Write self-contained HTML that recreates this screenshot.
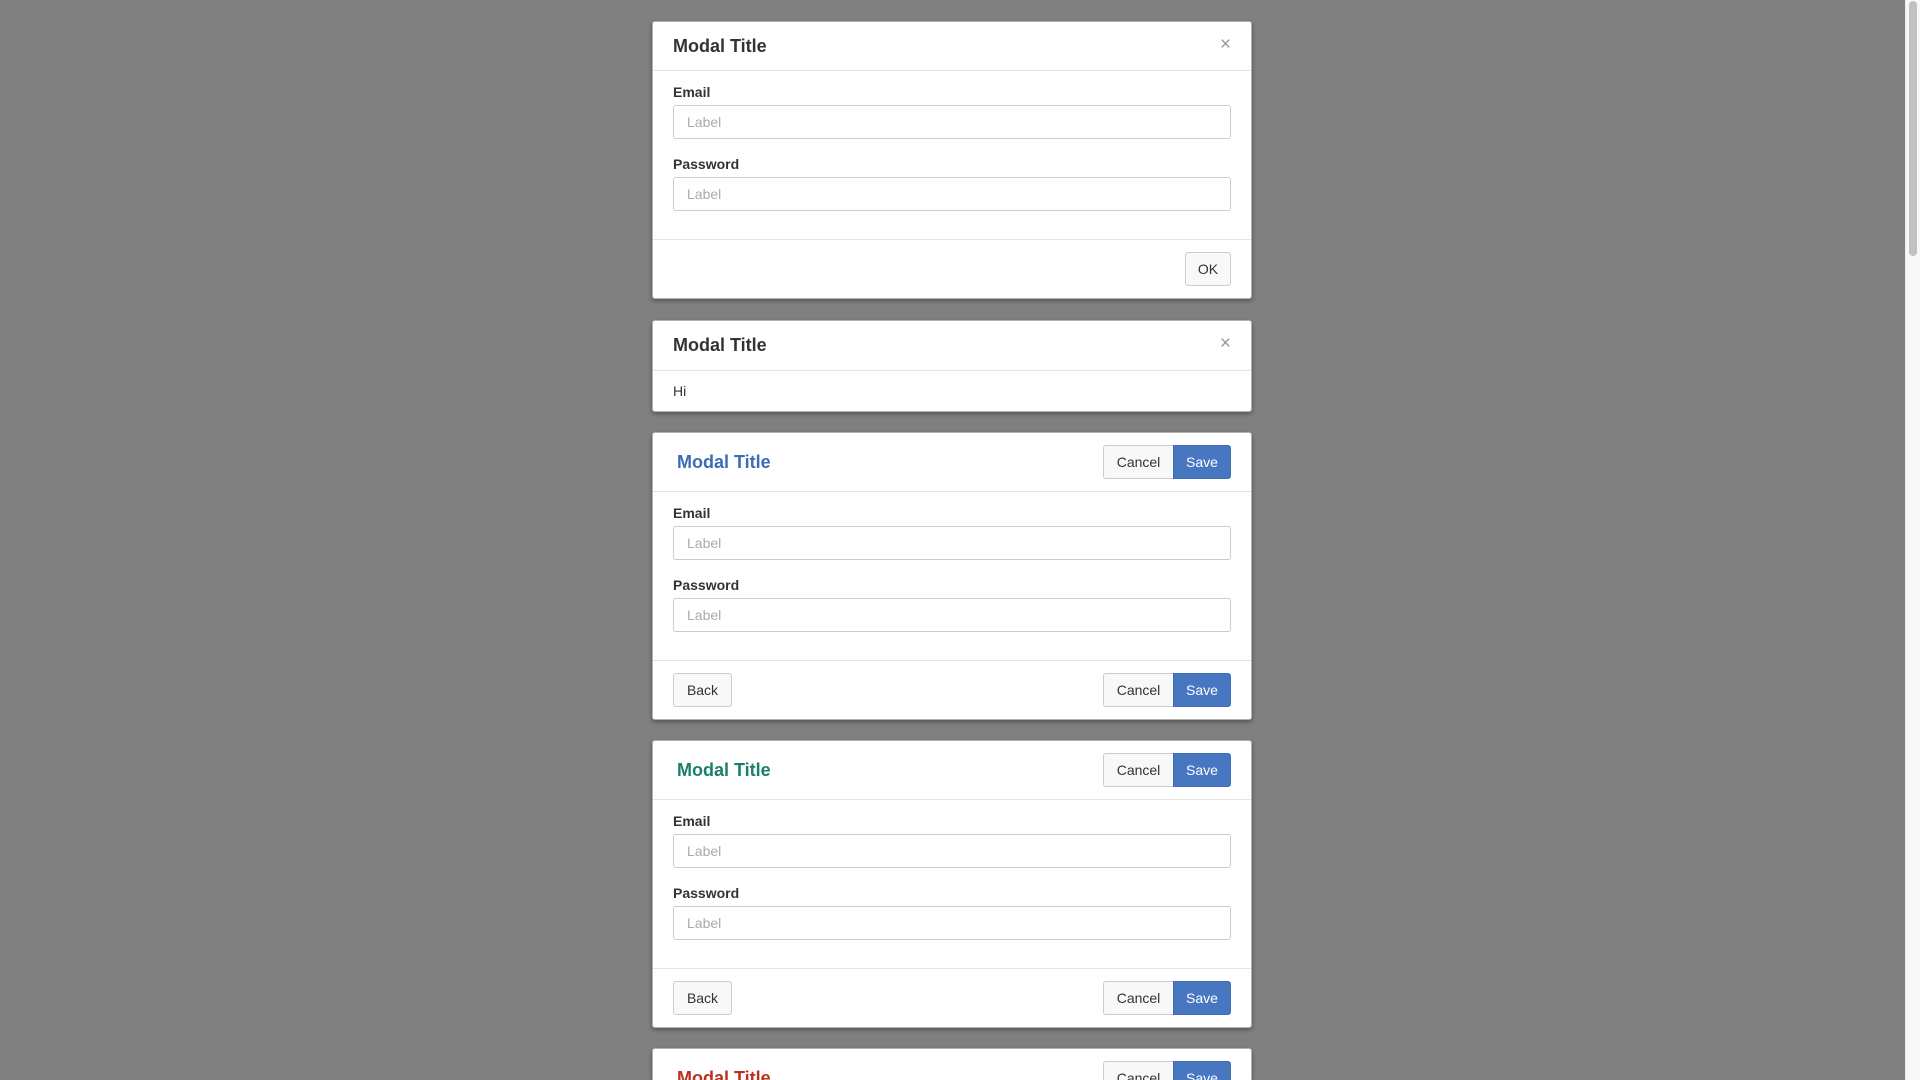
<!DOCTYPE html>
<html><head><meta charset="utf-8"><style>
*{box-sizing:border-box;margin:0;padding:0}
html,body{width:1920px;height:1080px;overflow:hidden}
body{background:#808080;font-family:"Liberation Sans",Arial,sans-serif;font-size:14px;color:#333;position:relative}
.sb{position:absolute;left:1905px;top:0;width:15px;height:1080px;background:#f8f8f8;border-left:1px solid #ececec}
.sb i{position:absolute;left:3px;top:1px;width:8px;height:255px;background:#c1c1c1;border-radius:4px}
.m{position:absolute;left:652px;width:600px;background:#fff;border:1px solid rgba(0,0,0,.3);border-radius:3px;box-shadow:0 2px 5px rgba(0,0,0,.35);overflow:hidden}
.hd{position:relative;border-bottom:1px solid #e5e5e5}
.t{font-size:18px;font-weight:bold;position:absolute;left:20px}
.x{position:absolute;right:20px;color:#999;font-size:19px;line-height:19px}
.bd{padding:11px 20px 0 20px}
label{display:block;font-weight:bold;line-height:20px;margin-bottom:3px}
.in{height:34px;border:1px solid #ccc;border-radius:3px;padding:0 13px;line-height:32px;color:#aaa;margin-bottom:15px}
.ft{border-top:1px solid #e5e5e5;position:relative}
.b{position:absolute;height:34px;line-height:32px;border:1px solid #ccc;background:#f8f8f8;border-radius:3px;text-align:center;color:#333}
.g{position:absolute;right:20px;display:flex}
.g .c,.g .s{height:34px;line-height:32px;border:1px solid #ccc;text-align:center}
.g .c{width:70px;background:#f8f8f8;border-radius:3px 0 0 3px;border-right:none}
.g .s{width:58px;background:#4877c1;border-color:#3f6cb2;color:#fff;border-radius:0 3px 3px 0}
</style></head><body>
<div class="sb"><i></i></div>

<div class="m" style="top:21px;height:278px">
 <div class="hd" style="height:49px"><div class="t" style="top:14px">Modal Title</div><div class="x" style="top:13px">×</div></div>
 <div class="bd">
  <label>Email</label><div class="in">Label</div>
  <label>Password</label><div class="in">Label</div>
 </div>
 <div class="ft" style="position:absolute;top:217px;left:0;right:0;height:60px"><div class="b" style="right:20px;top:12px;width:46px">OK</div></div>
</div>

<div class="m" style="top:320px;height:92px">
 <div class="hd" style="height:50px"><div class="t" style="top:14px">Modal Title</div><div class="x" style="top:13px">×</div></div>
 <div style="padding:10px 20px;line-height:20px">Hi</div>
</div>

<div class="m" style="top:432px;height:288px">
 <div class="hd" style="height:59px"><div class="t" style="top:19px;left:24px;color:#3a6db5">Modal Title</div>
  <div class="g" style="top:12px"><div class="c">Cancel</div><div class="s">Save</div></div></div>
 <div class="bd">
  <label>Email</label><div class="in">Label</div>
  <label>Password</label><div class="in">Label</div>
 </div>
 <div class="ft" style="position:absolute;top:227px;left:0;right:0;height:60px">
  <div class="b" style="left:20px;top:12px;width:59px">Back</div>
  <div class="g" style="top:12px"><div class="c">Cancel</div><div class="s">Save</div></div></div>
</div>

<div class="m" style="top:740px;height:288px">
 <div class="hd" style="height:59px"><div class="t" style="top:19px;left:24px;color:#19806a">Modal Title</div>
  <div class="g" style="top:12px"><div class="c">Cancel</div><div class="s">Save</div></div></div>
 <div class="bd">
  <label>Email</label><div class="in">Label</div>
  <label>Password</label><div class="in">Label</div>
 </div>
 <div class="ft" style="position:absolute;top:227px;left:0;right:0;height:60px">
  <div class="b" style="left:20px;top:12px;width:59px">Back</div>
  <div class="g" style="top:12px"><div class="c">Cancel</div><div class="s">Save</div></div></div>
</div>

<div class="m" style="top:1048px;height:32px;border-bottom:none;border-radius:3px 3px 0 0">
 <div class="hd" style="height:59px;border-bottom:none"><div class="t" style="top:19px;left:24px;color:#b8321e">Modal Title</div>
  <div class="g" style="top:12px"><div class="c">Cancel</div><div class="s">Save</div></div></div>
</div>
</body></html>
